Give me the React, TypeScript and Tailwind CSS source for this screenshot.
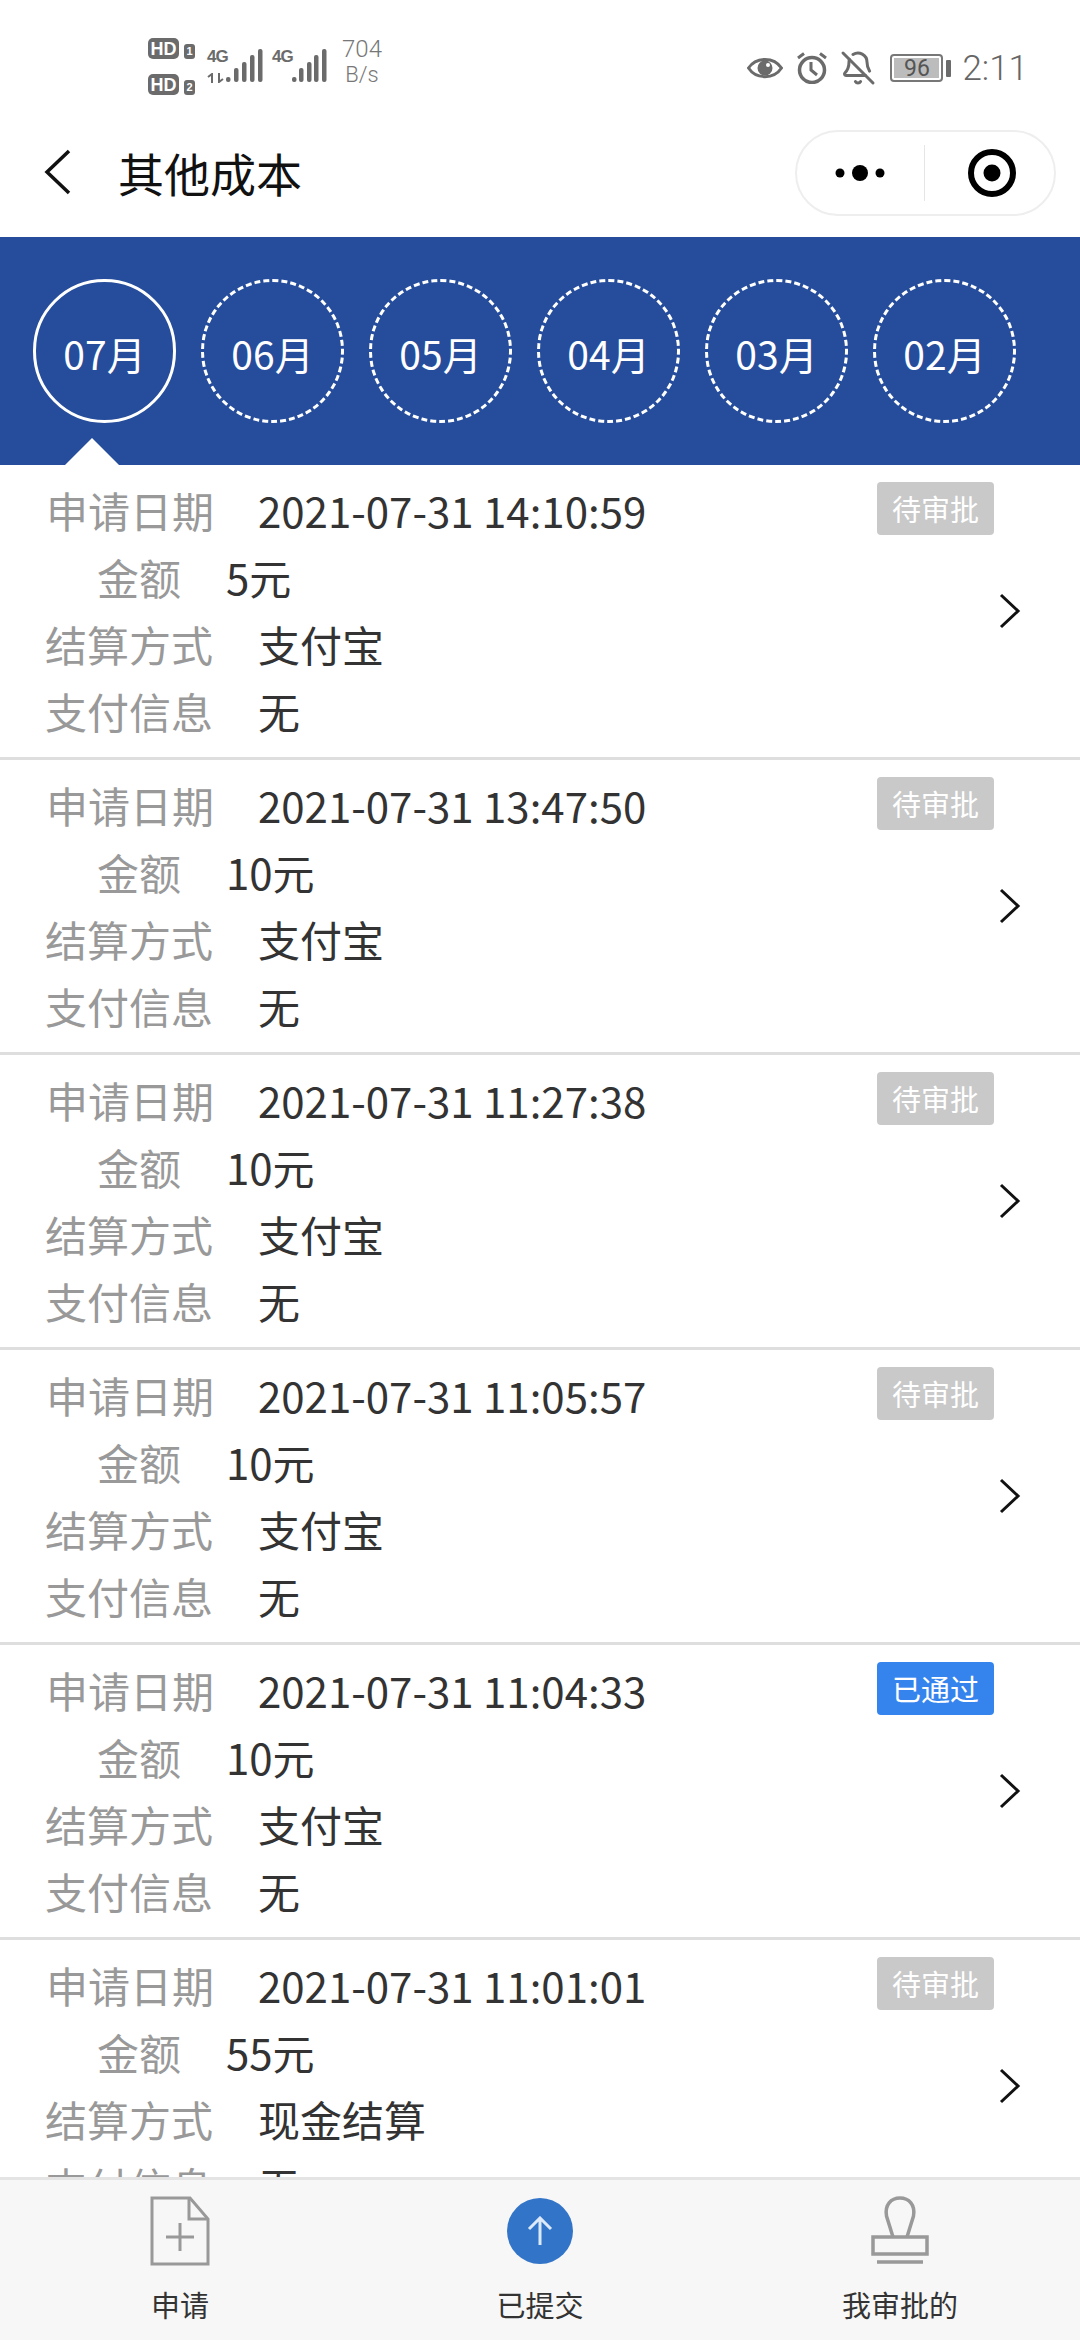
import { BellOff } from 'lucide-react';

const MONTHS = ['07月', '06月', '05月', '04月', '03月', '02月'];

const RECORDS = [
  { date: '2021-07-31 14:10:59', amount: '5元', method: '支付宝', status: '待审批' },
  { date: '2021-07-31 13:47:50', amount: '10元', method: '支付宝', status: '待审批' },
  { date: '2021-07-31 11:27:38', amount: '10元', method: '支付宝', status: '待审批' },
  { date: '2021-07-31 11:05:57', amount: '10元', method: '支付宝', status: '待审批' },
  { date: '2021-07-31 11:04:33', amount: '10元', method: '支付宝', status: '已通过' },
  { date: '2021-07-31 11:01:01', amount: '55元', method: '现金结算', status: '待审批' },
];

function SignalBars({ width, xs }: { width: number; xs: number[] }) {
  const tops = [28, 19, 13, 6, 0];
  return (
    <svg width={width} height={33} viewBox={`0 0 ${width} 33`} fill="#6b6b6b">
      {xs.map((x, i) => (
        <rect key={x} x={x} y={tops[i]} width={4.5} height={33 - tops[i]} rx={2} />
      ))}
    </svg>
  );
}

function StatusBar() {
  return (
    <div className="flex h-[110px] items-start pl-[148px] pr-[52px] pt-[38px] text-[#6b6b6b]">
      {/* sim cards */}
      <div className="flex w-[47px] flex-col gap-[15px]">
        {['1', '2'].map((n) => (
          <div key={n} className="flex items-end justify-between">
            <span className="flex h-[21px] w-[31px] items-center justify-center rounded-[5px] bg-[#6b6b6b] font-['Liberation_Sans',sans-serif] text-[18px] leading-none font-bold text-white">
              HD
            </span>
            <span className="flex h-[15px] w-[11px] items-center justify-center rounded-[3px] bg-[#6b6b6b] font-['Liberation_Sans',sans-serif] text-[11px] leading-none font-bold text-white">
              {n}
            </span>
          </div>
        ))}
      </div>

      {/* network 1 */}
      <div className="ml-[12px] flex pt-[11px]">
        <div className="flex w-[19px] flex-col">
          <span className="font-['Liberation_Sans',sans-serif] text-[17px] leading-[15px] font-bold tracking-[-1px]">4G</span>
          <svg width="19" height="10" viewBox="0 0 19 10" className="mt-[9px]" stroke="#6b6b6b" strokeWidth="2" fill="none">
            <path d="M5 10V1L1 4M12 0v9l4-3" />
          </svg>
        </div>
        <SignalBars width={38} xs={[0, 8, 16, 24, 32]} />
      </div>

      {/* network 2 */}
      <div className="ml-[8px] flex pt-[11px]">
        <span className="w-[19px] font-['Liberation_Sans',sans-serif] text-[17px] leading-[15px] font-bold tracking-[-1px]">4G</span>
        <SignalBars width={36} xs={[1, 8, 16, 23, 31]} />
      </div>

      <div className="ml-[16px] flex w-[38px] flex-col items-center font-['Roboto',sans-serif] text-[24px] leading-[26px] font-light text-[#777]">
        <span className="-mt-[2px]">704</span>
        <span className="text-[22px]">B/s</span>
      </div>

      <div className="ml-auto flex items-center pt-[12px]">
        <svg width="36" height="28" viewBox="0 0 36 28">
          <path d="M1.5 14C9 2.5 27 2.5 34.500 14 27 25.500 9 25.500 1.500 14Z" fill="none" stroke="#6b6b6b" strokeWidth="3" />
          <circle cx="18" cy="14" r="7.500" fill="#6b6b6b" />
          <circle cx="21" cy="11" r="2" fill="#fff" />
        </svg>
        <svg width="34" height="32" viewBox="0 0 34 32" className="ml-[12px]" fill="none" stroke="#6b6b6b">
          <circle cx="17" cy="18" r="12.500" strokeWidth="3.500" />
          <path d="M16 10v8l6 5" strokeWidth="3" />
          <path d="M3 6l6-4.500M31 6l-6-4.500" strokeWidth="3" />
        </svg>
        <BellOff size={36} strokeWidth={2} className="ml-[11px] text-[#6b6b6b]" />
        <div className="ml-[14px] flex h-[28px] w-[53px] items-center rounded-[4px] border-2 border-[#777] p-[2px]">
          <span className="flex h-full w-full items-center justify-center bg-[#bcbcbc] font-['Roboto',sans-serif] text-[23px] leading-none text-[#555]">
            96
          </span>
        </div>
        <div className="ml-[3px] h-[17px] w-[5px] rounded-[1px] bg-[#6b6b6b]" />
        <span className="ml-[11px] font-['Roboto',sans-serif] text-[35px] leading-none font-light text-[#666]">2:11</span>
      </div>
    </div>
  );
}

function NavBar() {
  return (
    <div className="flex h-[127px] items-start">
      <svg width="28" height="46" viewBox="0 0 28 46" className="mt-[39px] ml-[44px]" fill="none" stroke="#111" strokeWidth="3.500">
        <path d="M25 2L3 23l22 21" />
      </svg>
      <h1 className="mt-[31px] ml-[46px] text-[46px] leading-[62px] font-normal text-[#111]">其他成本</h1>
      <div className="mt-[20px] mr-[24px] ml-auto flex h-[86px] w-[261px] items-center rounded-full border-2 border-[#eeeeee]">
        <svg width="50" height="16" viewBox="0 0 50 16" className="ml-[38px]" fill="#000">
          <circle cx="5" cy="8" r="4.500" />
          <circle cx="25" cy="8" r="8" />
          <circle cx="45" cy="8" r="4.500" />
        </svg>
        <div className="ml-[39px] h-[56px] w-px bg-[#e6e6e6]" />
        <svg width="48" height="48" viewBox="0 0 48 48" className="ml-[43px]">
          <circle cx="24" cy="24" r="21" fill="none" stroke="#000" strokeWidth="6" />
          <circle cx="24" cy="24" r="8.500" fill="#000" />
        </svg>
      </div>
    </div>
  );
}

function MonthBar() {
  return (
    <div className="relative flex h-[228px] gap-[25px] bg-[#264d9b] pt-[42px] pl-[33px]">
      {MONTHS.map((m, i) => (
        <div
          key={m}
          className={`flex h-[144px] w-[143px] items-center justify-center rounded-full border-[3px] border-white pt-[4px] text-[39px] leading-none text-white ${i === 0 ? 'border-solid' : 'border-dashed'}`}
        >
          {m}
        </div>
      ))}
      <svg width="54" height="27" viewBox="0 0 54 27" className="absolute bottom-0 left-[65px]" fill="#fff">
        <path d="M27 0l27 27H0z" />
      </svg>
    </div>
  );
}

function RecordRow({ date, amount, method, status }: (typeof RECORDS)[number]) {
  return (
    <div className="flex h-[295px] shrink-0 items-start border-b-[3px] border-[#dedede] bg-white">
      <div className="flex-1 pt-[11px] text-[42px] leading-[67px] text-[#333]">
        <div className="flex">
          <span className="ml-[46px] w-[212px] text-[#999]">申请日期</span>
          <span>{date}</span>
        </div>
        <div className="flex">
          <span className="ml-[97px] w-[129px] text-[#999]">金额</span>
          <span>{amount}</span>
        </div>
        <div className="flex">
          <span className="ml-[45px] w-[213px] text-[#999]">结算方式</span>
          <span>{method}</span>
        </div>
        <div className="flex">
          <span className="ml-[45px] w-[213px] text-[#999]">支付信息</span>
          <span>无</span>
        </div>
      </div>
      <span
        className={`mt-[17px] flex h-[53px] w-[117px] items-center justify-center rounded-[4px] text-[29px] leading-none text-white ${status === '已通过' ? 'bg-[#3584ee]' : 'bg-[#c9c9c9]'}`}
      >
        {status}
      </span>
      <svg width="22" height="36" viewBox="0 0 22 36" className="mt-[128px] mr-[59px] ml-[5px]" fill="none" stroke="#111" strokeWidth="3">
        <path d="M2 2l17 16L2 34" />
      </svg>
    </div>
  );
}

function TabBar() {
  return (
    <div className="grid h-[163px] shrink-0 grid-cols-3 border-t-[3px] border-[#e4e4e4] bg-[#f7f7f7] pt-[16px]">
      <div className="flex flex-col items-center">
        <svg width="60" height="70" viewBox="0 0 60 70" fill="none" stroke="#999" strokeWidth="3">
          <path d="M2 2h38l18 21v45H2z" />
          <path d="M39 2v21h19" />
          <path d="M16 41h28M30 27v28" />
        </svg>
        <span className="mt-[18px] text-[29px] leading-[40px] text-[#333]">申请</span>
      </div>
      <div className="flex flex-col items-center">
        <div className="flex h-[70px] items-center">
          <div className="flex h-[66px] w-[66px] items-center justify-center rounded-full bg-[#3274c8]">
            <svg width="28" height="30" viewBox="0 0 28 30" fill="none" stroke="#dbe9fb" strokeWidth="3">
              <path d="M14 29V2M3 13L14 2l11 11" />
            </svg>
          </div>
        </div>
        <span className="mt-[18px] text-[29px] leading-[40px] text-[#333]">已提交</span>
      </div>
      <div className="flex flex-col items-center">
        <svg width="58" height="70" viewBox="0 0 58 70" fill="none" stroke="#999" strokeWidth="3.500">
          <path d="M22 41L15.500 20C13.500 9 20 2 29 2s15.500 7 13.500 18L36 41" />
          <path d="M2 41h54v17H2z" />
          <path d="M6 66h46" />
        </svg>
        <span className="mt-[18px] text-[29px] leading-[40px] text-[#333]">我审批的</span>
      </div>
    </div>
  );
}

export default function App() {
  return (
    <div className="flex h-[2340px] w-[1080px] flex-col overflow-hidden bg-white font-['Noto_Sans_CJK_SC','Noto_Sans',sans-serif]">
      <StatusBar />
      <NavBar />
      <MonthBar />
      <div className="flex min-h-0 flex-1 flex-col overflow-hidden">
        {RECORDS.map((r) => (
          <RecordRow key={r.date} {...r} />
        ))}
      </div>
      <TabBar />
    </div>
  );
}
